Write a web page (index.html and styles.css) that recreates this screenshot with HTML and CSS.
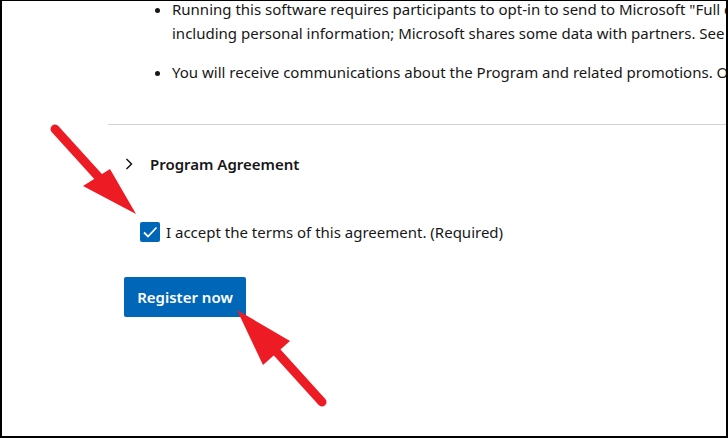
FILE: index.html
```html
<!DOCTYPE html>
<html>
<head>
<meta charset="utf-8">
<link rel="stylesheet" href="styles.css">
</head>
<body>
<div class="frame">
  <div class="content">
    <ul class="terms">
      <li><span class="line">Running this software requires participants to opt-in to send to Microsoft "Full diagnostic data"</span><span class="line">including personal information; Microsoft shares some data with partners. See the privacy statement</span></li>
      <li><span class="line">You will receive communications about the Program and related promotions. Opt out anytime.</span></li>
    </ul>
    <div class="divider"></div>
    <div class="accordion">
      <svg class="chevron" width="8" height="12" viewBox="0 0 8 12"><path d="M1.5 1 L6.5 6 L1.5 11" fill="none" stroke="#171717" stroke-width="1.5"/></svg>
      <span class="acc-title">Program Agreement</span>
    </div>
    <label class="accept">
      <span class="checkbox"><svg width="20" height="20" viewBox="0 0 20 20"><path d="M4 10.5 L8 14.5 L16.5 5.5" fill="none" stroke="#fff" stroke-width="1.8"/></svg></span>
      <span class="accept-text">I accept the terms of this agreement. (Required)</span>
    </label>
    <button class="register">Register now</button>
  </div>
  <svg class="arrows" width="728" height="438" viewBox="0 0 728 438">
    <line x1="55" y1="129" x2="104" y2="183" stroke="#ed1c24" stroke-width="9" stroke-linecap="round"/>
    <polygon points="136,214 83,186 110,169" fill="#ed1c24"/>
    <line x1="322" y1="402" x2="274" y2="349" stroke="#ed1c24" stroke-width="9" stroke-linecap="round"/>
    <polygon points="237,310 263,365 290,341" fill="#ed1c24"/>
  </svg>
</div>
</body>
</html>
```
FILE: styles.css
```css
html, body {
  margin: 0;
  padding: 0;
  background: #fff;
}
.frame {
  position: relative;
  width: 728px;
  height: 438px;
  box-sizing: border-box;
  border-style: solid;
  border-color: #000;
  border-width: 1px 2px 2px 2px;
  overflow: hidden;
  font-family: "Noto Sans", "Open Sans", sans-serif;
  color: #171717;
  background: #fff;
}
.content {
  padding-left: 106px;
}
.terms {
  margin: -4px 0 0 0;
  padding-left: 64px;
  font-size: 15px;
  line-height: 24px;
  white-space: nowrap;
}
.terms li + li {
  margin-top: 15px;
}
.line {
  display: block;
}
.divider {
  margin-top: 40px;
  border-top: 1px solid #d2d2d2;
}
.accordion {
  display: flex;
  align-items: center;
  height: 24px;
  margin-top: 27px;
  padding-left: 17px;
}
.chevron {
  display: block;
}
.acc-title {
  margin-left: 17px;
  font-size: 15px;
  font-weight: 600;
}
.accept {
  display: flex;
  align-items: center;
  height: 24px;
  margin-top: 44px;
  padding-left: 32px;
  font-size: 15px;
}
.checkbox {
  width: 20px;
  height: 20px;
  background: #0067b8;
  border-radius: 2px;
  display: block;
}
.checkbox svg {
  display: block;
}
.accept-text {
  margin-left: 6px;
}
.register {
  display: block;
  margin: 33px 0 0 16px;
  width: 122px;
  height: 40px;
  border: 0;
  border-radius: 2px;
  background: #0067b8;
  color: #fff;
  font-family: "Noto Sans", "Open Sans", sans-serif;
  font-size: 15px;
  font-weight: 600;
  padding: 0;
}
.arrows {
  position: absolute;
  left: -2px;
  top: -1px;
  pointer-events: none;
}
```
